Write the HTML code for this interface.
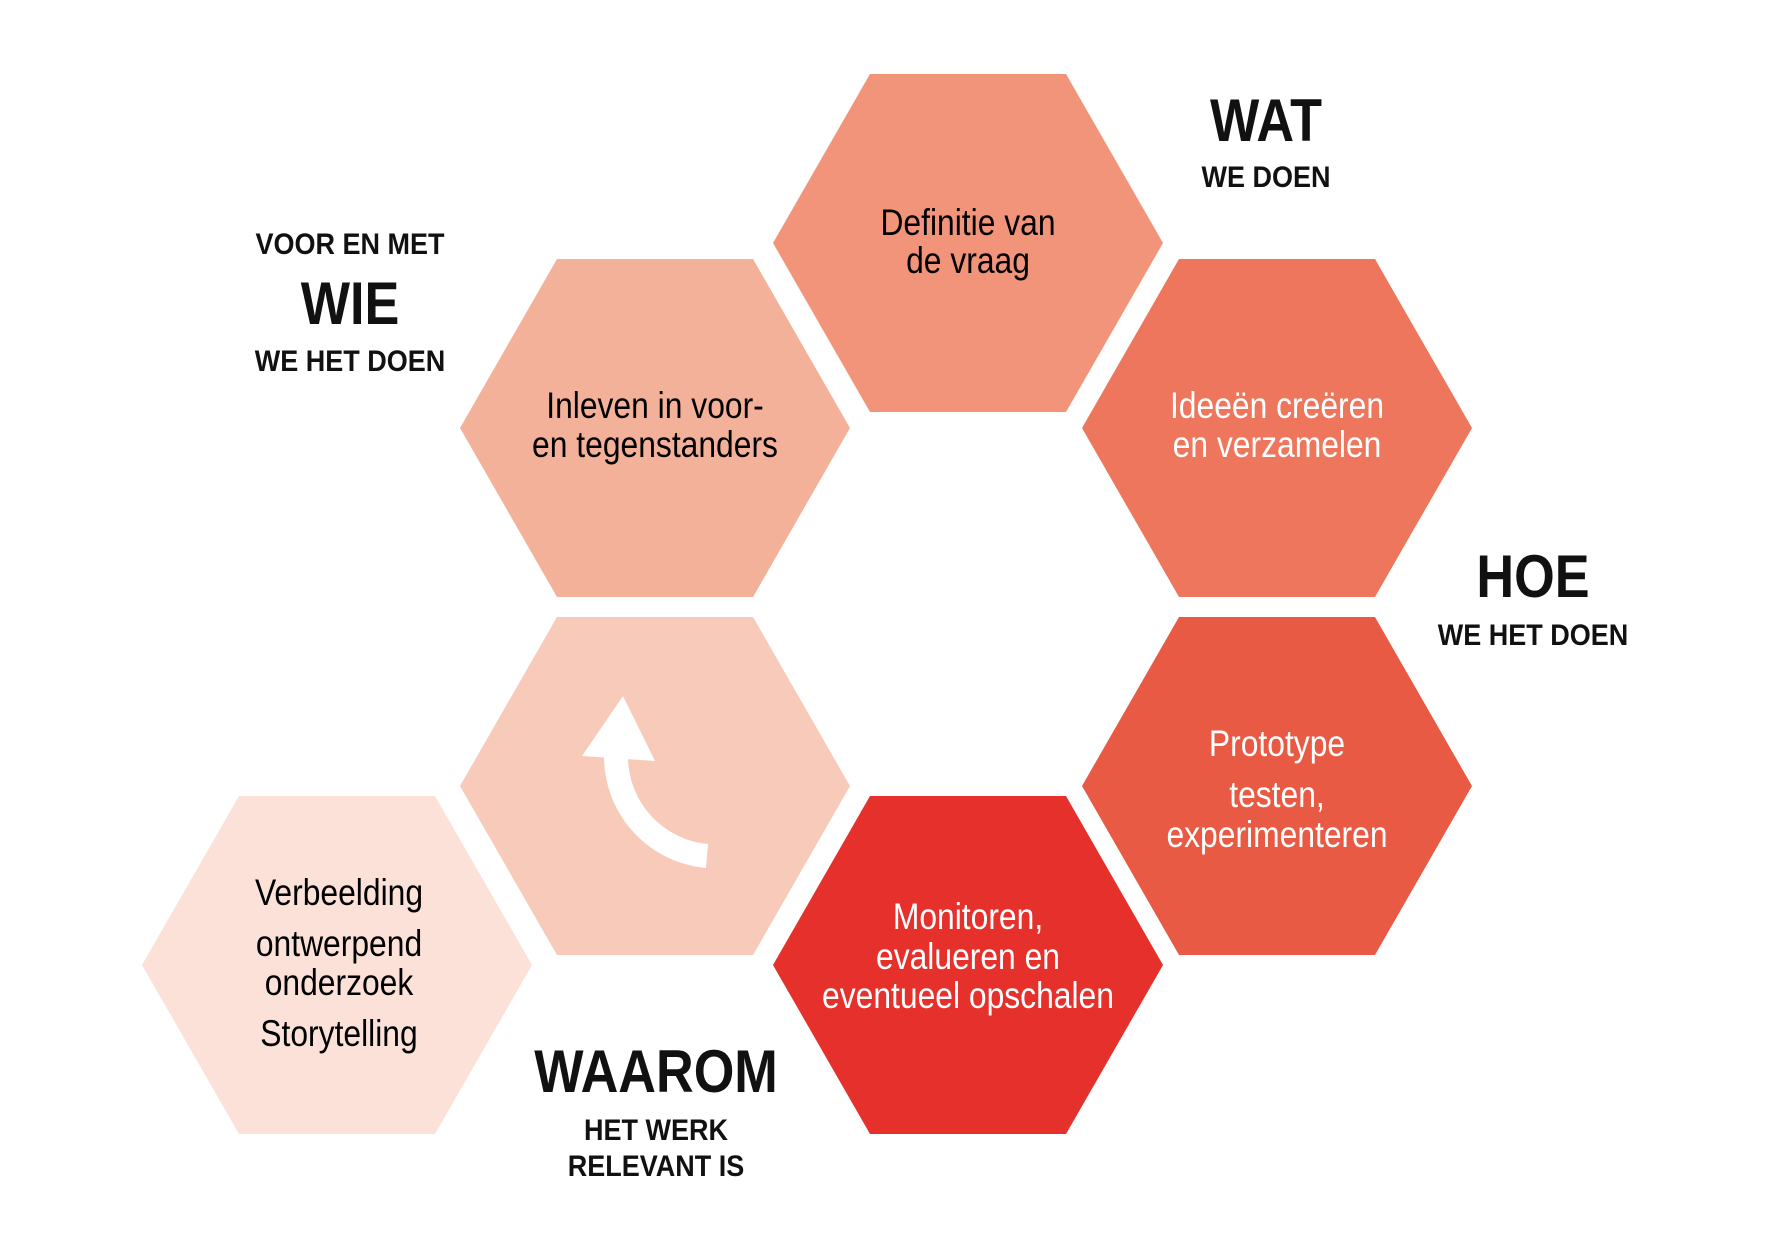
<!DOCTYPE html>
<html><head><meta charset="utf-8"><style>
html,body{margin:0;padding:0;background:#fff;}
#c{position:relative;width:1772px;height:1245px;overflow:hidden;font-family:"Liberation Sans",sans-serif;}
svg{position:absolute;left:0;top:0;}
.t{position:absolute;width:0;height:0;}
.t span{position:absolute;left:0;white-space:nowrap;transform:translate(-50%,-50%) scaleX(0.86);font-size:37px;line-height:40px;}
.b span{font-weight:bold;color:#111;transform:translate(-50%,-50%) scaleX(0.9);}
.b span.big{transform:translate(-50%,-50%) scaleX(0.87);}
</style></head><body><div id="c">
<svg width="1772" height="1245" viewBox="0 0 1772 1245">
<defs><polygon id="h" points="-195,0 -98,-169 98,-169 195,0 98,169 -98,169"/></defs>
<g transform="translate(-4,0)">
<use href="#h" x="972" y="243" fill="#f19479"/>
<use href="#h" x="659" y="428" fill="#f4b19a"/>
<use href="#h" x="1281" y="428" fill="#ed765c"/>
<use href="#h" x="659" y="786" fill="#f8cab9"/>
<use href="#h" x="1281" y="786" fill="#e85a43"/>
<use href="#h" x="972" y="965" fill="#e5302b"/>
<use href="#h" x="341" y="965" fill="#fbe1d8"/>
</g>
<path d="M616,756 A100,100 0 0 0 707,856" fill="none" stroke="#fff" stroke-width="24"/>
<polygon points="623,696 582,756 655,761" fill="#fff"/>
</svg>
<div class="t" style="left:968px;top:223px"><span>Definitie van</span></div>
<div class="t" style="left:968px;top:261px"><span>de vraag</span></div>
<div class="t" style="left:655px;top:406px"><span>Inleven in voor-</span></div>
<div class="t" style="left:655px;top:445px"><span>en tegenstanders</span></div>
<div class="t" style="left:1277px;top:406px;color:#fff"><span>Ideeën creëren</span></div>
<div class="t" style="left:1277px;top:445px;color:#fff"><span>en verzamelen</span></div>
<div class="t" style="left:1277px;top:744px;color:#fff"><span>Prototype</span></div>
<div class="t" style="left:1277px;top:795px;color:#fff"><span>testen,</span></div>
<div class="t" style="left:1277px;top:835px;color:#fff"><span>experimenteren</span></div>
<div class="t" style="left:968px;top:917px;color:#fff"><span>Monitoren,</span></div>
<div class="t" style="left:968px;top:957px;color:#fff"><span>evalueren en</span></div>
<div class="t" style="left:968px;top:996px;color:#fff"><span>eventueel opschalen</span></div>
<div class="t" style="left:339px;top:893px"><span>Verbeelding</span></div>
<div class="t" style="left:339px;top:944px"><span>ontwerpend</span></div>
<div class="t" style="left:339px;top:983px"><span>onderzoek</span></div>
<div class="t" style="left:339px;top:1034px"><span>Storytelling</span></div>

<div class="t b" style="left:1266px;top:121px"><span class="big" style="font-size:60px">WAT</span></div>
<div class="t b" style="left:1266px;top:178px"><span style="font-size:30px">WE DOEN</span></div>
<div class="t b" style="left:350px;top:245px"><span style="font-size:30px">VOOR EN MET</span></div>
<div class="t b" style="left:350px;top:304px"><span class="big" style="font-size:60px">WIE</span></div>
<div class="t b" style="left:350px;top:362px"><span style="font-size:30px">WE HET DOEN</span></div>
<div class="t b" style="left:1533px;top:577px"><span class="big" style="font-size:60px">HOE</span></div>
<div class="t b" style="left:1533px;top:636px"><span style="font-size:30px">WE HET DOEN</span></div>
<div class="t b" style="left:656px;top:1072px"><span class="big" style="font-size:60px">WAAROM</span></div>
<div class="t b" style="left:656px;top:1131px"><span style="font-size:30px">HET WERK</span></div>
<div class="t b" style="left:656px;top:1167px"><span style="font-size:30px">RELEVANT IS</span></div>
</div></body></html>
